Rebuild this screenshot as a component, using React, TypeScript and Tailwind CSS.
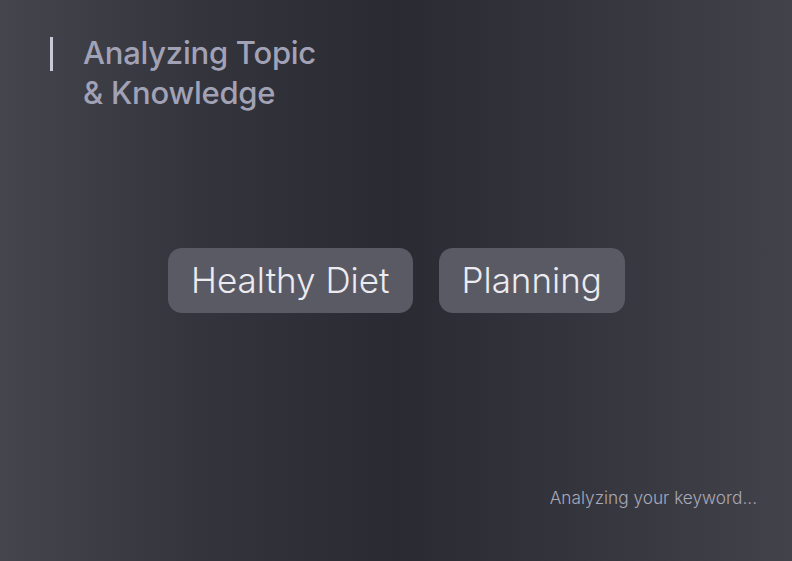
const chips = ['Healthy Diet', 'Planning'];

export default function App() {
  return (
    <div
      className="relative flex h-[561px] w-[792px] flex-col overflow-hidden bg-[linear-gradient(90deg,#45454e_0%,#34343d_25%,#2a2a33_50%,#34343d_72%,#42424b_100%)] font-['Inter',sans-serif]"
    >
      <header className="flex items-start pl-[50px] pt-[33px]">
        <div className="mt-[4px] h-[34px] w-[3px] bg-[#c8c8d8]" />
        <h1 className="ml-[30px] text-[31px] font-medium leading-[40px] tracking-[-0.25px] text-[#a2a2b6]">
          Analyzing Topic
          <br />& Knowledge
        </h1>
      </header>

      <div className="mt-[135px] flex justify-center gap-[26px] pl-[1px]">
        {chips.map((c) => (
          <div
            key={c}
            className="flex h-[65px] items-center rounded-[14px] bg-[#5a5a65] px-[23px] text-[35px] font-light text-[#ebebf0]"
          >
            {c}
          </div>
        ))}
      </div>

      <div className="mt-auto flex justify-end pb-[50px] pr-[35px]">
        <p className="text-[17.25px] font-light text-[#a9a9b8]">Analyzing your keyword...</p>
      </div>
    </div>
  );
}
